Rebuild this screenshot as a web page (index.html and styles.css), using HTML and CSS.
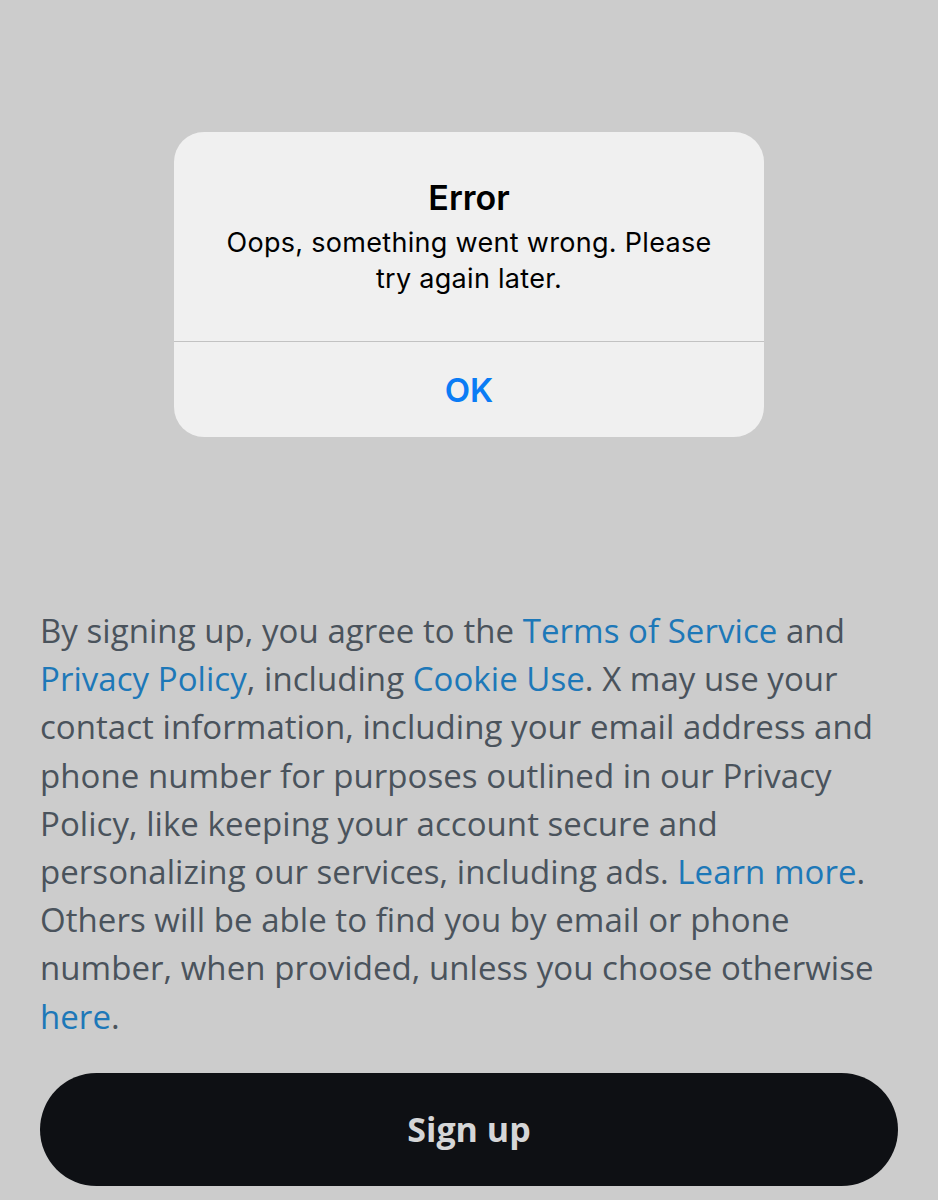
FILE: index.html
```html
<!DOCTYPE html>
<html lang="en">
<head>
    <meta charset="UTF-8">
    <meta name="viewport" content="width=device-width, initial-scale=1.0">
    <title>Sign up</title>
    <link rel="stylesheet" href="styles.css">
</head>
<body>
    <div class="page">
        <!-- Alert -->
        <div class="alert">
            <div class="alert-body">
                <h1 class="alert-title">Error</h1>
                <p class="alert-message">Oops, something went wrong. Please try again later.</p>
            </div>
            <button class="alert-button">OK</button>
        </div>

        <!-- Legal text -->
        <p class="legal">
            By signing up, you agree to the <a href="#">Terms of Service</a> and
            <a href="#">Privacy Policy</a>, including <a href="#">Cookie Use</a>. X may use your
            contact information, including your email address and phone number for purposes outlined in our Privacy
            Policy, like keeping your account secure and personalizing our services, including ads. <a href="#">Learn more</a>.
            Others will be able to find you by email or phone number, when provided, unless you choose otherwise
            <a href="#">here</a>.
        </p>

        <button class="signup">Sign up</button>
    </div>
</body>
</html>
```

FILE: styles.css
```css
body {
    margin: 0;
    background-color: #cccccc;
    font-family: Inter, "Open Sans", sans-serif;
}
.page {
    width: 938px;
    height: 1200px;
    padding: 132px 40px 0;
    box-sizing: border-box;
    overflow: hidden;
}
.alert {
    width: 590px;
    margin: 0 auto 0 134px;
    background-color: #f0f0f0;
    border-radius: 30px;
    overflow: hidden;
}
.alert-body {
    padding: 44px 45px 44px;
    text-align: center;
    border-bottom: 1px solid #c2c2c2;
}
.alert-title {
    margin: 0;
    font-size: 34px;
    line-height: 44px;
    font-weight: 600;
    color: #000;
}
.alert-message {
    margin: 5px 0 0;
    font-size: 27px;
    line-height: 36px;
    letter-spacing: 0.3px;
    color: #000;
}
.alert-button {
    display: block;
    width: 100%;
    height: 95px;
    border: none;
    background: none;
    font-family: inherit;
    font-size: 33px;
    font-weight: 600;
    color: #0a7cf5;
}
.legal {
    margin: 170px 0 0;
    font-family: "Open Sans", sans-serif;
    font-size: 33px;
    line-height: 48.2px;
    letter-spacing: 0.05px;
    color: #4a535c;
}
.legal a {
    color: #1d78b8;
    text-decoration: none;
}
.signup {
    display: block;
    width: 100%;
    height: 113px;
    margin-top: 32px;
    border: none;
    border-radius: 57px;
    background-color: #0e1014;
    color: #d5d6d7;
    font-family: "Open Sans", sans-serif;
    font-size: 34px;
    font-weight: 700;
}
```
